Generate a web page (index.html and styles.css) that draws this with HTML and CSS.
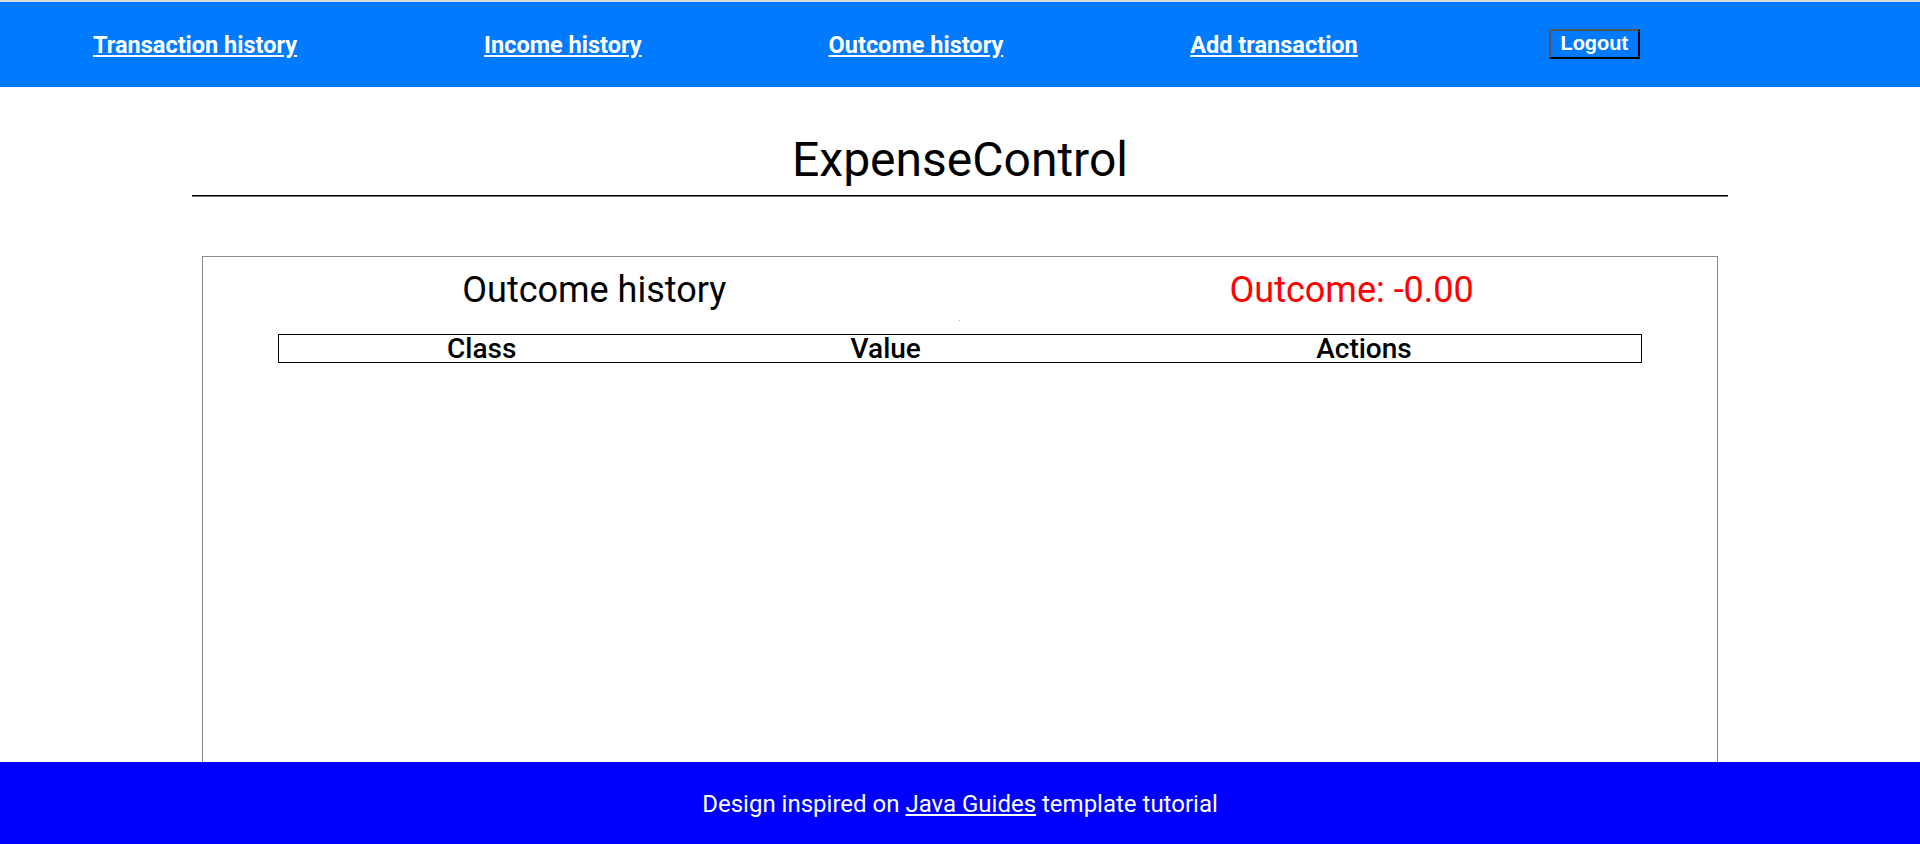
FILE: index.html
```html
<!DOCTYPE html>
<html lang="en">
<head>
<meta charset="utf-8">
<title>ExpenseControl</title>
<link rel="stylesheet" href="styles.css">
</head>
<body>
<header class="topbar">
  <nav class="nav">
    <a class="nav-link" href="#">Transaction history</a>
    <a class="nav-link" href="#">Income history</a>
    <a class="nav-link" href="#">Outcome history</a>
    <a class="nav-link" href="#">Add transaction</a>
    <button class="logout" type="button">Logout</button>
  </nav>
</header>
<main class="main">
  <h1 class="title">ExpenseControl</h1>
  <hr class="rule">
  <section class="panel">
    <div class="panel-head">
      <h2 class="panel-title">Outcome history</h2>
      <h2 class="panel-title total">Outcome: -0.00</h2>
    </div>
    <div class="dot"></div>
    <table class="history">
      <colgroup>
        <col class="c-class">
        <col class="c-value">
        <col class="c-actions">
      </colgroup>
      <thead>
        <tr><th>Class</th><th>Value</th><th>Actions</th></tr>
      </thead>
      <tbody></tbody>
    </table>
  </section>
</main>
<footer class="footer">
  <p class="footer-text">Design inspired on <a class="footer-link" href="#">Java Guides</a> template tutorial</p>
</footer>
</body>
</html>
```
FILE: styles.css
```css
html, body {
  margin: 0;
  padding: 0;
}
body {
  font-family: Roboto, "Noto Sans", sans-serif;
  color: #000;
  background: #fff;
}
.topbar {
  border-top: 2px solid #dcdcdc;
  background: #007bff;
}
.nav {
  height: 85px;
  display: flex;
  align-items: center;
  padding-left: 93px;
  gap: 187px;
}
.nav-link {
  color: #fff;
  font-weight: 700;
  font-size: 23.5px;
  text-decoration: underline;
}
.logout {
  font-family: "Liberation Sans", Arial, sans-serif;
  font-weight: 700;
  font-size: 20px;
  color: #fff;
  background: transparent;
  border-width: 2px;
  border-style: solid;
  border-color: #555 #000 #000 #555;
  height: 30px;
  width: 91px;
  padding: 0;
  margin-top: -2px;
  margin-left: 4px;
}
.main {
  padding-top: 1px;
}
.title {
  font-weight: 400;
  font-size: 48px;
  text-align: center;
  margin: 44px 0 0;
  line-height: 56px;
}
.rule {
  width: 80%;
  margin: 7px auto 0;
  border: 0;
  border-top: 1px solid #000;
  border-bottom: 1px solid #777;
  height: 0;
}
.panel {
  width: 79%;
  margin: 59px auto 0;
  border: 1px solid #8a8a8a;
  height: 620px;
  box-sizing: border-box;
}
.panel-head {
  display: grid;
  grid-template-columns: 1fr 1fr;
  margin-top: 12px;
}
.panel-title {
  font-weight: 400;
  font-size: 36px;
  text-align: center;
  margin: 0;
  padding-left: 26px;
}
.total {
  color: #ff0000;
}
.dot {
  width: 1px;
  height: 1px;
  background: #b0b0b0;
  margin: 9px auto 0;
}
.history {
  width: 90%;
  margin: 13px auto 0;
  border: 1px solid #000;
  border-collapse: collapse;
}
.c-class { width: 29.75%; }
.c-value { width: 29.6%; }
.c-actions { width: 40.65%; }
.history th {
  font-size: 28px;
  font-weight: 500;
  line-height: 27px;
  padding: 0;
  text-align: center;
}
.footer {
  position: fixed;
  left: 0;
  right: 0;
  bottom: 0;
  height: 82px;
  background: #0000ff;
  color: #fff;
  display: flex;
  align-items: center;
  justify-content: center;
}
.footer-text {
  margin: 0;
  font-size: 24px;
  padding-top: 2px;
}
.footer-link {
  color: #fff;
  text-decoration: underline;
}
```
